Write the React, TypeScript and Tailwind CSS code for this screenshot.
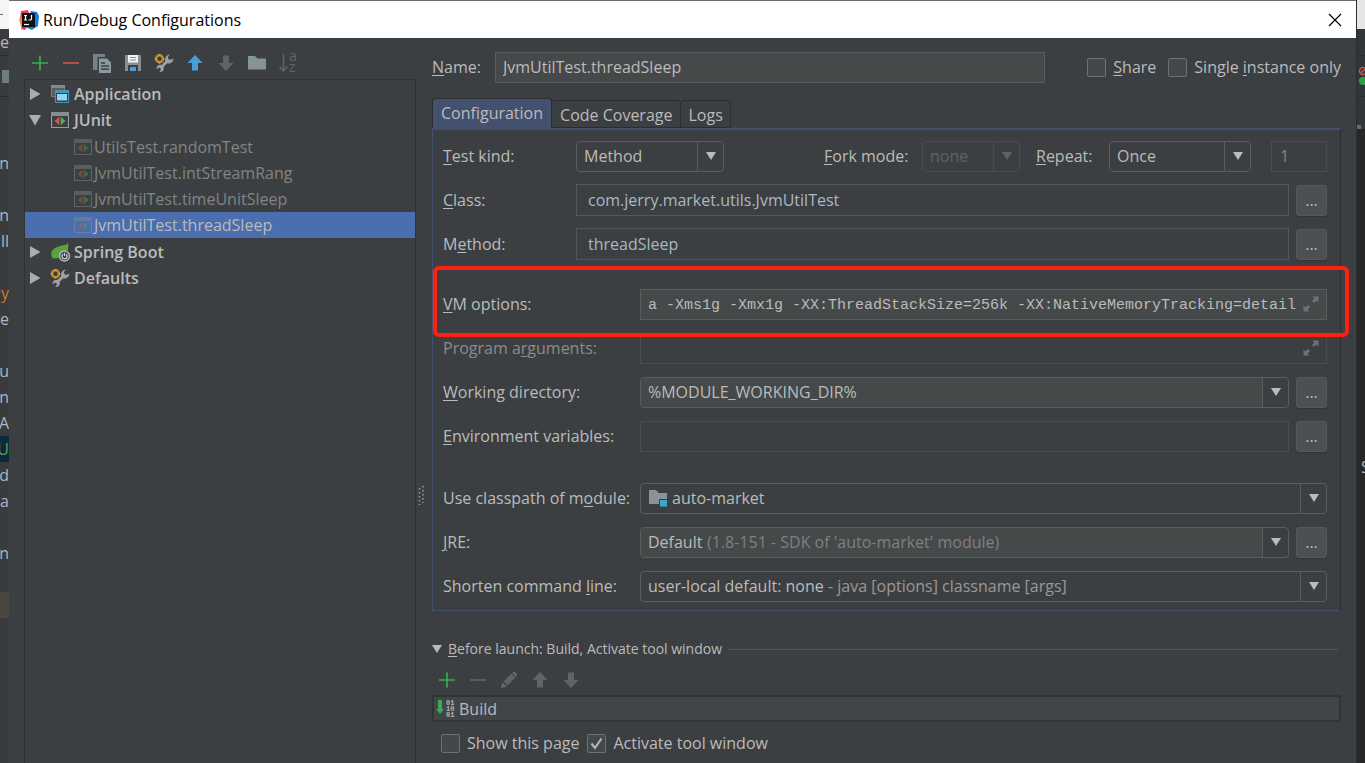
import React from 'react';

const svgBase = {width: 18, height: 18, viewBox: '0 0 18 18', 'aria-hidden': true, className: 'shrink-0'};

function PlusIcon() {
    return (
        <svg {...svgBase}>
            <path d="M1 9H17M9 1.5V16.5" stroke="#33ac50" strokeWidth="1.7" fill="none"/>
        </svg>
    );
}

function MinusIcon({color}: { color: string }) {
    return (
        <svg {...svgBase}>
            <path d="M1 9H17" stroke={color} strokeWidth="1.7"/>
        </svg>
    );
}

function CopyIcon() {
    return (
        <svg {...svgBase} overflow="visible">
            <path d="M0 0H12V3H4.5V16H0Z" fill="#75828a"/>
            <path d="M6 4.5H14L18 8.5V19H6Z" fill="#8c999f"/>
            <path d="M8 9H12M8 12H16M8 15H16" stroke="#3c3f41" strokeWidth="1.3"/>
        </svg>
    );
}

function SaveIcon() {
    return (
        <svg {...svgBase}>
            <path d="M1 1H17V17H1Z" fill="#8e8e8e"/>
            <path d="M4 1H14V8.5H4Z" fill="#f2f2f2"/>
            <path d="M6 3.5H12M6 6H12" stroke="#8e8e8e" strokeWidth="1"/>
            <path d="M4 11H14V17H4Z" fill="#3c3f41"/>
            <path d="M6 13H12V17H6Z" fill="#4a9fd6"/>
        </svg>
    );
}

function WrenchIcon() {
    return (
        <svg {...svgBase} overflow="visible">
            <path d="M18.4 4.6a4.8 4.8 0 0 1-6.2 4.700L8.600 13a3.700 3.700 0 0 1-4.200 5l1.500-2.200-.6-1.700-1.900-.3-1.600 1.800a3.700 3.700 0 0 1 4.700-4.700L10.300 7A4.800 4.800 0 0 1 14.800 .6L12.900 3l.5 2.200 2.300.6Z" fill="#a0a0a0"/>
            <circle cx="4.500" cy="4.700" r="3.400" stroke="#c98a2b" strokeWidth="2.400" fill="#3c3f41"/>
            <path d="M4.500 0V1.500M4.500 8V9.400M-.3 4.700H1.200M7.800 4.700H9.300" stroke="#e0a54a" strokeWidth="1.500"/>
        </svg>
    );
}

function ArrowIcon({color, down = false}: { color: string, down?: boolean }) {
    return (
        <svg {...svgBase}>
            <path d={down ? 'M9 17L1.500 9H6V1.500H12V9H16.500Z' : 'M9 1L16.500 9H12V16.500H6V9H1.500Z'} fill={color}/>
        </svg>
    );
}

function FolderIcon() {
    return (
        <svg {...svgBase}>
            <path d="M0 2H7L9.500 4.500H18V15.500H0Z" fill="#87939a"/>
        </svg>
    );
}

function SortIcon() {
    return (
        <svg {...svgBase} overflow="visible">
            <path d="M4.500 0V17M.5 12.500L4.500 17L8.500 12.500" stroke="#616465" strokeWidth="1.500" fill="none"/>
            <text fontSize="14" fill="#616465">
                <tspan x="10" y="7">a</tspan>
                <tspan x="10" y="18">z</tspan>
            </text>
        </svg>
    );
}

function PencilIcon() {
    return (
        <svg {...svgBase}>
            <path d="M1 17L2.500 11.500L6.500 15.500Z" fill="#6b6e6f"/>
            <path d="M3.500 10.500L11.500 2.500L15.500 6.500L7.500 14.500Z" fill="#606364"/>
            <path d="M12.300 1.800Q14 .2 16 2Q17.800 4 16.200 5.700Z" fill="#6b6e6f"/>
        </svg>
    );
}

function ApplicationIcon() {
    return (
        <svg {...svgBase}>
            <path d="M.5 .5H13.500V11.500H.5Z" fill="#5a5d5e" stroke="#7d7f80"/>
            <path d="M0 0H14V3H0Z" fill="#858788"/>
            <path d="M4.500 5.500H17.500V17.500H4.500Z" fill="#3c3f41" stroke="#4a94bd"/>
            <path d="M4 5H18V8H4Z" fill="#4a94bd"/>
            <path d="M6 9H16V15.500H6Z" fill="#8fd3f5"/>
        </svg>
    );
}

function JUnitIcon({dim = false}: { dim?: boolean }) {
    return (
        <svg {...svgBase} opacity={dim ? 0.4 : 1}>
            <path d="M.5 1.500H17.500V16.500H.5Z" fill="none" stroke="#9a9da0" strokeWidth="1.200"/>
            <path d="M0 1H18V5H0Z" fill="#8a8d8f"/>
            <path d="M8.300 5.800V14.200L3.500 10Z" fill="#d9534a"/>
            <path d="M9.700 5.800V14.200L14.500 10Z" fill="#4fae52"/>
        </svg>
    );
}

function SpringIcon() {
    return (
        <svg {...svgBase} overflow="visible">
            <path d="M17 0C15 3 4 2.500 1 8C-.5 11 .5 14 2 15.500C9 16 14 13 16.500 8C17.500 5 17.500 2 17 0Z" fill="#5ea03b"/>
            <circle cx="13.500" cy="13" r="5" fill="#3c3f41" stroke="#a9b8bf" strokeWidth="1.500"/>
            <path d="M11.700 11.300A2.600 2.600 0 1 0 15.300 11.300M13.500 9.800V13" stroke="#c3d0d6" strokeWidth="1.300" fill="none"/>
        </svg>
    );
}

function ModuleIcon() {
    return (
        <svg {...svgBase} width="20" viewBox="0 0 20 18">
            <path d="M1 1H8L10.500 4H19V15H1Z" fill="#87939a"/>
            <path d="M11.500 10.500H19.500V18H11.500Z" fill="#40a5d0" stroke="#3c3f41"/>
        </svg>
    );
}

function BuildIcon() {
    return (
        <svg {...svgBase} width="19" viewBox="0 0 19 18">
            <path d="M2 0H6V9H8L4 14L0 9H2Z" fill="#35ad50"/>
            <text fill="#b5b5b5" fontSize="7" fontWeight="700" fontFamily="Liberation Mono, monospace">
                <tspan x="10" y="5">01</tspan>
                <tspan x="10" y="11">10</tspan>
                <tspan x="10" y="17">01</tspan>
            </text>
        </svg>
    );
}

function ExpandIcon() {
    return (
        <svg width="16" height="16" viewBox="0 0 16 16" aria-hidden="true" className="mr-[7px] shrink-0">
            <path d="M9.500 .5H15.500V6.500L13.500 4.500L11 7L9 5L11.500 2.500Z" fill="#6a7579"/>
            <path d="M.5 9.500L2.500 11.500L5 9L7 11L4.500 13.500L6.500 15.500H.5Z" fill="#6a7579"/>
        </svg>
    );
}

function IdeaLogo() {
    return (
        <svg width="20" height="20" viewBox="0 0 20 20" aria-hidden="true" className="shrink-0">
            <path d="M2 1L9 0L12 10L3 16L1 9Z" fill="#f23a5d"/>
            <path d="M0 9L6 7V19L2 17Z" fill="#f98a26"/>
            <path d="M4 14L9 16L6 20L2 19Z" fill="#e8368f"/>
            <path d="M12 1L18 2L20 6L19 16L13 20L6 17Z" fill="#127ee8"/>
            <path d="M3 3H16V17H3Z" fill="#111"/>
            <path d="M5 5.500H8M6.500 5.500V10M5 10H8M12.500 5V8.700Q12.500 10 11 10H9.500" stroke="#fff" strokeWidth="1.200" fill="none"/>
            <path d="M5 14.500H10" stroke="#fff" strokeWidth="1.200"/>
        </svg>
    );
}

function Triangle({open = false}: { open?: boolean }) {
    return (
        <svg width="12" height="12" viewBox="0 0 12 12" aria-hidden="true" className="shrink-0">
            <path d={open ? 'M0 1H12L6 11.500Z' : 'M1 0V12L11.500 6Z'} fill="#adadad"/>
        </svg>
    );
}

function SmallArrow({color = '#bbbbbb'}: { color?: string }) {
    return (
        <svg width="10" height="8" viewBox="0 0 10 8" aria-hidden="true" className="shrink-0">
            <path d="M0 0H10L5 8Z" fill={color}/>
        </svg>
    );
}

function Key({children}: { children: React.ReactNode }) {
    return <span className="underline underline-offset-2">{children}</span>;
}

function ToolButton({label, disabled, children}: { label: string, disabled?: boolean, children: React.ReactNode }) {
    return <button type="button" aria-label={label} disabled={disabled}>{children}</button>;
}

function MoreButton({label}: { label: string }) {
    return (
        <button type="button" aria-label={label}
                className="ml-[7px] h-[31px] w-[31px] shrink-0 rounded-[3px] border border-[#53585a] bg-[#4c5052] leading-5 shadow-[0_1px_1px_#323435]">
            ...
        </button>
    );
}

type ComboProps = {
    id: string;
    value: string;
    hint?: string;
    hintClass?: string;
    icon?: React.ReactNode;
    disabled?: boolean;
    editable?: boolean;
    className: string;
};

function Combo({id, value, hint, hintClass = '', icon, disabled, editable, className}: ComboProps) {
    return (
        <div className={`flex h-[31px] items-center rounded-[4px] border ${disabled ? 'border-[#4a4d4f]' : 'border-[#5a5d5e]'} ${className}`}>
            <div className={`flex h-full min-w-0 flex-1 items-center gap-1 overflow-hidden rounded-l-[3px] pl-[7px] ${editable ? 'bg-[#45494a]' : ''}`}>
                {icon}
                <select id={id} disabled={disabled}
                        className={`h-full appearance-none bg-transparent outline-none ${hint ? '' : 'w-full'} ${disabled ? 'text-[#5f6263]' : 'text-[#bbbbbb]'}`}>
                    <option>{value}</option>
                </select>
                {hint && <span className={`truncate ${hintClass}`}>{hint}</span>}
            </div>
            <div className={`flex h-full w-[26px] shrink-0 items-center justify-center border-l ${disabled ? 'border-[#4a4d4f]' : 'border-[#5a5d5e]'}`}>
                <SmallArrow color={disabled ? '#5f6263' : '#bbbbbb'}/>
            </div>
        </div>
    );
}

function Check({id, checked = false, children}: { id: string, checked?: boolean, children: React.ReactNode }) {
    return (
        <div className="flex items-center gap-[7px] whitespace-nowrap">
            <span className="grid">
                <input id={id} type="checkbox" defaultChecked={checked}
                       className="col-start-1 row-start-1 h-[19px] w-[19px] appearance-none rounded-[2px] border border-[#6e7172] bg-[#43494a]"/>
                {checked &&
                    <svg width="19" height="19" viewBox="0 0 19 19" aria-hidden="true"
                         className="pointer-events-none col-start-1 row-start-1">
                        <path d="M4.500 9.500L8 14L14.500 4.500" stroke="#b4b4b4" strokeWidth="2.200" fill="none"/>
                    </svg>}
            </span>
            <label htmlFor={id}>{children}</label>
        </div>
    );
}

function FormRow({id, label, narrow, muted, className = '', children}: {
    id: string, label: React.ReactNode, narrow?: boolean, muted?: boolean, className?: string, children: React.ReactNode
}) {
    return (
        <div className={`flex h-[30px] items-center ${className}`}>
            <label htmlFor={id}
                   className={`shrink-0 whitespace-nowrap ${narrow ? 'w-[133px]' : 'w-[197px]'} ${muted ? 'text-[#8c8c8c]' : ''}`}>
                {label}
            </label>
            {children}
        </div>
    );
}

const codeRows = [
    {text: '.n'}, {text: ''}, {text: 'n'}, {text: 'll'}, {text: ''},
    {text: 'y', color: 'text-[#cc7832]'}, {text: 'e'}, {text: ''}, {text: 'du'}, {text: 'n'},
    {text: 'A'}, {text: 'U', color: 'bg-[#0d293e] text-[#6a9a4a]'}, {text: 'd'}, {text: 'la'}, {text: ''},
    {text: 'on'}, {text: ''}, {text: '', color: 'bg-[#49473e]'},
];

function LeftEdge() {
    return (
        <div aria-hidden="true" className="flex w-[9px] shrink-0 flex-col overflow-hidden bg-[#393b3d] text-[#a9b7c6]">
            <div className="flex h-[29px] shrink-0 items-center bg-[#f5f5f5]">
                <div className="h-px w-[3px] bg-gray-500"/>
            </div>
            <div className="flex h-[27px] shrink-0 items-center justify-center border-b border-[#2b2b2b] text-[#bbbbbb]">e</div>
            <div className="flex h-[41px] shrink-0 items-center justify-end border-b border-[#2b2b2b]">
                <div className="h-[13px] w-[7px] bg-[#6f7c84]"/>
            </div>
            <div className="h-[53px] shrink-0"/>
            {codeRows.map((row, i) => (
                <div key={i} className={`flex h-[26px] shrink-0 items-center justify-end ${row.color ?? ''}`}>{row.text}</div>
            ))}
        </div>
    );
}

function RightEdge() {
    return (
        <div aria-hidden="true" className="flex w-2 shrink-0 flex-col overflow-hidden bg-[#272727] text-[#a9b7c6]">
            <div className="h-[29px] shrink-0 bg-[#e6e6e6]"/>
            <div className="h-[27px] shrink-0 border-b border-[#2b2b2b] bg-[#333638]"/>
            <div className="flex h-[41px] shrink-0 flex-col items-end justify-center border-b border-[#2b2b2b] bg-[#333638]">
                <svg width="7" height="20" viewBox="0 0 7 20">
                    <circle cx="5" cy="5" r="3.500" stroke="#c75450" strokeWidth="1.500" fill="none"/>
                    <path d="M3 7L7 3" stroke="#c75450" strokeWidth="1.500"/>
                    <circle cx="5" cy="15" r="4" fill="#2f9e49"/>
                </svg>
            </div>
            <div className="flex h-8 shrink-0 items-end bg-[#333638]">
                <div className="h-1 w-1 bg-[#40798f]"/>
            </div>
            <div className="h-[325px] shrink-0"/>
            <div className="flex h-[26px] shrink-0 items-center pl-1">S</div>
        </div>
    );
}

function GroupRow({icon, open, children}: { icon: React.ReactNode, open?: boolean, children: React.ReactNode }) {
    return (
        <div className="flex h-[26px] items-center pl-1 font-semibold">
            <Triangle open={open}/>
            <span className="ml-[10px] mr-[5px]">{icon}</span>
            {children}
        </div>
    );
}

const tests = ['UtilsTest.randomTest', 'JvmUtilTest.intStreamRang', 'JvmUtilTest.timeUnitSleep', 'JvmUtilTest.threadSleep'];

function Sidebar() {
    return (
        <div className="flex w-[407px] shrink-0 flex-col pl-[15px]">
            <div className="flex h-[41px] shrink-0 items-center gap-[13px] pl-[7px] pt-2">
                <ToolButton label="Add"><PlusIcon/></ToolButton>
                <ToolButton label="Remove"><MinusIcon color="#c75450"/></ToolButton>
                <ToolButton label="Copy"><CopyIcon/></ToolButton>
                <ToolButton label="Save"><SaveIcon/></ToolButton>
                <ToolButton label="Edit defaults"><WrenchIcon/></ToolButton>
                <ToolButton label="Move up"><ArrowIcon color="#4a9fd0"/></ToolButton>
                <ToolButton label="Move down" disabled><ArrowIcon color="#616465" down/></ToolButton>
                <ToolButton label="Create folder"><FolderIcon/></ToolButton>
                <ToolButton label="Sort" disabled><SortIcon/></ToolButton>
            </div>
            <ul className="flex-1 border border-b-0 border-[#303233] pt-px">
                <li><GroupRow icon={<ApplicationIcon/>}>Application</GroupRow></li>
                <li>
                    <GroupRow icon={<JUnitIcon/>} open>JUnit</GroupRow>
                    <ul className="py-px">
                        {tests.map((name, i) => (
                            <li key={name}
                                className={`flex h-[26px] items-center gap-[2px] pl-[49px] ${i === 3 ? 'bg-[#4b6eaf]' : 'text-[#828485]'}`}>
                                <JUnitIcon dim/>
                                {name}
                            </li>
                        ))}
                    </ul>
                </li>
                <li><GroupRow icon={<SpringIcon/>}>Spring Boot</GroupRow></li>
                <li><GroupRow icon={<WrenchIcon/>}>Defaults</GroupRow></li>
            </ul>
        </div>
    );
}

function Splitter() {
    return (
        <div className="w-4 shrink-0 pl-[2px] pt-[448px]">
            <svg width="6" height="19" viewBox="0 0 6 19" aria-hidden="true">
                <path d="M1.500 2V19M5 0V17" stroke="#9a9c9d" strokeWidth="1.500" strokeDasharray="1.500 2.500"/>
            </svg>
        </div>
    );
}

function ConfigurationForm() {
    return (
        <div className="flex flex-col gap-[14px] border border-t-2 border-[#43506e] border-r-[#2b2d2e] pb-[9px] pl-[10px] pr-[13px] pt-[11px]">
            <FormRow id="kind" narrow label={<><Key>T</Key>est kind:</>}>
                <Combo id="kind" value="Method" className="w-[148px]"/>
                <label htmlFor="fork" className="ml-auto w-[98px] shrink-0"><Key>F</Key>ork mode:</label>
                <Combo id="fork" value="none" disabled className="w-[98px]"/>
                <label htmlFor="repeat" className="ml-4 w-[73px] shrink-0"><Key>R</Key>epeat:</label>
                <Combo id="repeat" value="Once" className="w-[142px]"/>
                <input type="text" aria-label="Repeat count" defaultValue="1" disabled
                       className="ml-5 h-[31px] w-[56px] border border-[#4a4d4f] px-2 text-[#808487]"/>
            </FormRow>
            <FormRow id="class" narrow label={<><Key>C</Key>lass:</>}>
                <input id="class" type="text" defaultValue="com.jerry.market.utils.JvmUtilTest"
                       className="h-8 min-w-0 flex-1 border border-[#555859] px-[11px] text-[#a9b7c6]"/>
                <MoreButton label="Browse class"/>
            </FormRow>
            <FormRow id="method" narrow label={<>M<Key>e</Key>thod:</>}>
                <input id="method" type="text" defaultValue="threadSleep"
                       className="h-8 min-w-0 flex-1 border border-[#555859] px-[11px] text-[#a9b7c6]"/>
                <MoreButton label="Browse method"/>
            </FormRow>
            <FormRow id="vm" className="relative mt-4" label={<><Key>V</Key>M options:</>}>
                <div className="flex h-[31px] min-w-0 flex-1 items-center border border-[#5a5d5e] bg-[#45494a]">
                    <input id="vm" type="text"
                           defaultValue="a -Xms1g -Xmx1g -XX:ThreadStackSize=256k -XX:NativeMemoryTracking=detail"
                           className="h-full min-w-0 flex-1 bg-transparent pl-[7px] pt-[2px] font-['Liberation_Mono',monospace] text-[15px]"/>
                    <ExpandIcon/>
                </div>
                <div className="pointer-events-none absolute -bottom-[18px] -left-[10px] -right-[22px] -top-[23px] z-10 rounded-md border-4 border-[#fd2013]"/>
            </FormRow>
            <FormRow id="args" muted label={<>Program a<Key>r</Key>guments:</>}>
                <div className="flex h-[31px] min-w-0 flex-1 items-center border border-[#4a4d4f]">
                    <input id="args" type="text" className="h-full min-w-0 flex-1 bg-transparent pl-[7px]"/>
                    <ExpandIcon/>
                </div>
            </FormRow>
            <FormRow id="dir" label={<><Key>W</Key>orking directory:</>}>
                <Combo id="dir" value="%MODULE_WORKING_DIR%" editable className="min-w-0 flex-1"/>
                <MoreButton label="Browse directory"/>
            </FormRow>
            <FormRow id="env" label={<><Key>E</Key>nvironment variables:</>}>
                <input id="env" type="text" className="h-[31px] min-w-0 flex-1 border border-[#4a4d4f] px-[7px]"/>
                <MoreButton label="Edit variables"/>
            </FormRow>
            <FormRow id="module" className="mt-[18px]" label={<>Use classpath of m<Key>o</Key>dule:</>}>
                <Combo id="module" value="auto-market" icon={<ModuleIcon/>} className="min-w-0 flex-1"/>
            </FormRow>
            <FormRow id="jre" label={<><Key>J</Key>RE:</>}>
                <Combo id="jre" value="Default" hint="(1.8-151 - SDK of 'auto-market' module)" hintClass="text-[#808080]"
                       editable className="min-w-0 flex-1"/>
                <MoreButton label="Browse JRE"/>
            </FormRow>
            <FormRow id="shorten" label={<>Shorten command <Key>l</Key>ine:</>}>
                <Combo id="shorten" value="user-local default: none" hint="- java [options] classname [args]"
                       hintClass="text-[#999999]" className="min-w-0 flex-1"/>
            </FormRow>
        </div>
    );
}

function BeforeLaunch() {
    return (
        <div className="flex flex-col">
            <div className="flex h-6 items-center gap-[6px] pr-[3px] text-sm">
                <SmallArrow/>
                <span><Key>B</Key>efore launch: Build, Activate tool window</span>
                <div className="h-px flex-1 bg-[#55585a]"/>
            </div>
            <div className="flex h-[34px] items-center gap-[13px] pl-[6px] pt-1">
                <ToolButton label="Add task"><PlusIcon/></ToolButton>
                <ToolButton label="Remove task" disabled><MinusIcon color="#5f6263"/></ToolButton>
                <ToolButton label="Edit task" disabled><PencilIcon/></ToolButton>
                <ToolButton label="Move task up" disabled><ArrowIcon color="#616465"/></ToolButton>
                <ToolButton label="Move task down" disabled><ArrowIcon color="#616465" down/></ToolButton>
            </div>
            <div className="flex h-[27px] items-center gap-1 border-2 border-[#313334] bg-[#414547] pl-[2px]">
                <BuildIcon/>
                Build
            </div>
            <div className="flex h-[42px] items-center gap-2 pl-[9px]">
                <Check id="show">Show this page</Check>
                <Check id="activate" checked>Activate tool window</Check>
            </div>
        </div>
    );
}

function App() {
    return (
        <div className="flex h-screen overflow-hidden bg-[#3c3f41] font-['Open_Sans','Noto_Sans',sans-serif] text-base leading-5 text-[#bbbbbb]">
            <LeftEdge/>
            <div className="flex min-w-0 flex-1 flex-col border-r border-[#2b2d2e] bg-[#3c3f41]">
                <div className="flex h-[38px] shrink-0 items-center justify-between border-t border-[#6b6b6b] bg-white pl-[10px] pr-[14px] text-black">
                    <h1 className="flex items-center gap-1"><IdeaLogo/>Run/Debug Configurations</h1>
                    <button type="button" aria-label="Close">
                        <svg width="14" height="14" viewBox="0 0 14 14">
                            <path d="M1 1L13 13M13 1L1 13" stroke="#000" strokeWidth="1.200"/>
                        </svg>
                    </button>
                </div>
                <div className="flex min-h-0 flex-1">
                    <Sidebar/>
                    <Splitter/>
                    <div className="flex min-w-0 flex-1 flex-col pr-[15px] pt-[14px]">
                        <div className="flex h-[30px] shrink-0 items-center">
                            <label htmlFor="name" className="w-[63px] shrink-0"><Key>N</Key>ame:</label>
                            <input id="name" type="text" defaultValue="JvmUtilTest.threadSleep"
                                   className="mr-[42px] h-[31px] min-w-0 flex-1 border border-[#5a5d5e] bg-[#45494a] px-[7px]"/>
                            <div className="flex gap-3">
                                <Check id="share"><Key>S</Key>hare</Check>
                                <Check id="single">Single <Key>i</Key>nstance only</Check>
                            </div>
                        </div>
                        <div role="tablist" className="mt-4 flex h-[30px] shrink-0 items-end">
                            <button type="button" role="tab" aria-selected="true"
                                    className="h-[30px] rounded-t-[3px] border border-b-0 border-[#2b2d2e] bg-[#43506e] px-2 pb-[2px]">
                                Configuration
                            </button>
                            <button type="button" role="tab" aria-selected="false"
                                    className="h-7 rounded-t-[3px] border border-l-0 border-[#2b2d2e] px-2 pt-[2px]">
                                Code Coverage
                            </button>
                            <button type="button" role="tab" aria-selected="false"
                                    className="h-7 rounded-t-[3px] border border-l-0 border-[#2b2d2e] px-[7px] pt-[2px]">
                                Logs
                            </button>
                        </div>
                        <ConfigurationForm/>
                        <div className="mt-[26px]">
                            <BeforeLaunch/>
                        </div>
                    </div>
                </div>
            </div>
            <RightEdge/>
        </div>
    );
}

export default App;
